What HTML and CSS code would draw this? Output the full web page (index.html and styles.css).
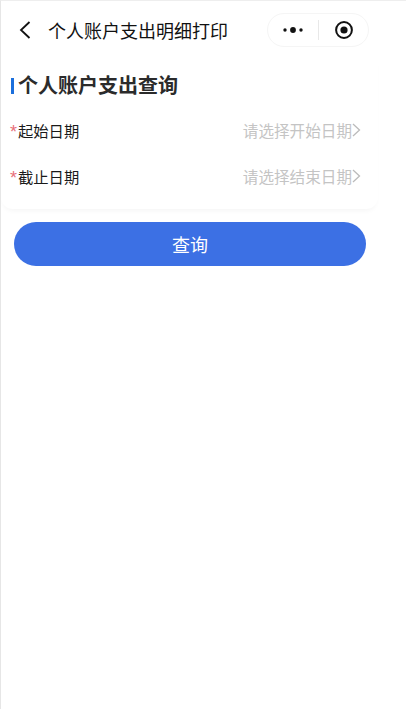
FILE: index.html
```html
<!DOCTYPE html>
<html lang="zh-CN">
<head>
  <meta charset="UTF-8">
  <meta name="viewport" content="width=device-width, initial-scale=1.0">
  <title>个人账户支出明细打印</title>
  <link rel="stylesheet" href="styles.css">
</head>
<body>
  <div class="page">
    <div class="navbar">
      <svg class="back" width="14" height="20" viewBox="0 0 14 20"><path d="M11.5 2 L3 10 L11.5 18" fill="none" stroke="#111" stroke-width="1.8"/></svg>
      <div class="nav-title">个人账户支出明细打印</div>
      <div class="capsule">
        <svg width="22" height="8" viewBox="0 0 22 8"><circle cx="3" cy="4" r="1.7" fill="#111"/><circle cx="11" cy="4" r="2.9" fill="#111"/><circle cx="19" cy="4" r="1.7" fill="#111"/></svg>
        <span class="capsule-line"></span>
        <svg width="20" height="20" viewBox="0 0 20 20"><circle cx="10" cy="10" r="7.9" fill="none" stroke="#111" stroke-width="2"/><circle cx="10" cy="10" r="3.6" fill="#111"/></svg>
      </div>
    </div>

    <div class="card">
      <h2 class="card-title">个人账户支出查询</h2>
      <div class="row">
        <div class="label"><span class="star">*</span>起始日期</div>
        <div class="picker">请选择开始日期<svg width="9" height="14" viewBox="0 0 9 14"><path d="M1 1 L7.5 7 L1 13" fill="none" stroke="#bbb" stroke-width="1.3"/></svg></div>
      </div>
      <div class="row">
        <div class="label"><span class="star">*</span>截止日期</div>
        <div class="picker">请选择结束日期<svg width="9" height="14" viewBox="0 0 9 14"><path d="M1 1 L7.5 7 L1 13" fill="none" stroke="#bbb" stroke-width="1.3"/></svg></div>
      </div>
    </div>

    <button class="query-btn">查询</button>
  </div>
</body>
</html>
```

FILE: styles.css
```css
html, body { margin: 0; padding: 0; background: #fff; }
body { font-family: "Liberation Sans", "Noto Sans CJK SC", sans-serif; color: #222; }
.page {
  width: 406px;
  height: 709px;
  box-sizing: border-box;
  border-top: 1px solid #eee;
  border-left: 1px solid #e6e6e6;
  overflow: hidden;
}
.navbar {
  display: flex;
  align-items: center;
  height: 58px;
  padding-left: 17px;
}
.back { flex-shrink: 0; }
.nav-title {
  margin-left: 16px;
  font-size: 18px;
  color: #111;
  white-space: nowrap;
}
.capsule {
  display: flex;
  align-items: center;
  box-sizing: border-box;
  width: 102px;
  height: 34px;
  margin-left: 39px;
  padding: 0 14px 0 14px;
  justify-content: space-between;
  border: 1px solid #f5f5f5;
  border-radius: 17px;
}
.capsule-line { width: 1px; height: 20px; background: #e8e8e8; margin-left: -1px; }
.card {
  width: 377px;
  box-sizing: border-box;
  padding: 19px 17px 10px 10px;
  border-radius: 0 0 12px 12px;
  box-shadow: 0 4px 5px -2px rgba(0,0,0,0.04);
}
.card-title {
  margin: 0;
  padding-left: 4px;
  border-left: 3px solid #1b6fdc;
  font-size: 20px;
  line-height: 16px;
  font-weight: bold;
  color: #2b2b2b;
  height: 16px;
}
.row {
  display: flex;
  align-items: center;
  justify-content: space-between;
  height: 46px;
}
.row:first-of-type { margin-top: 13px; }
.label { display: flex; align-items: center; margin-left: -1px; font-size: 15.3px; color: #1a1a1a; }
.star { width: 8px; color: #e8707a; font-size: 18px; line-height: 15px; padding-top: 4px; }
.picker {
  display: flex;
  align-items: center;
  font-size: 15.6px;
  color: #c4c4c4;
}
.query-btn {
  display: block;
  width: 352px;
  height: 44px;
  margin: 13px 0 0 13px;
  border: none;
  border-radius: 22px;
  background: #3c70e4;
  color: #fff;
  font-family: inherit;
  font-size: 18px;
}
```
